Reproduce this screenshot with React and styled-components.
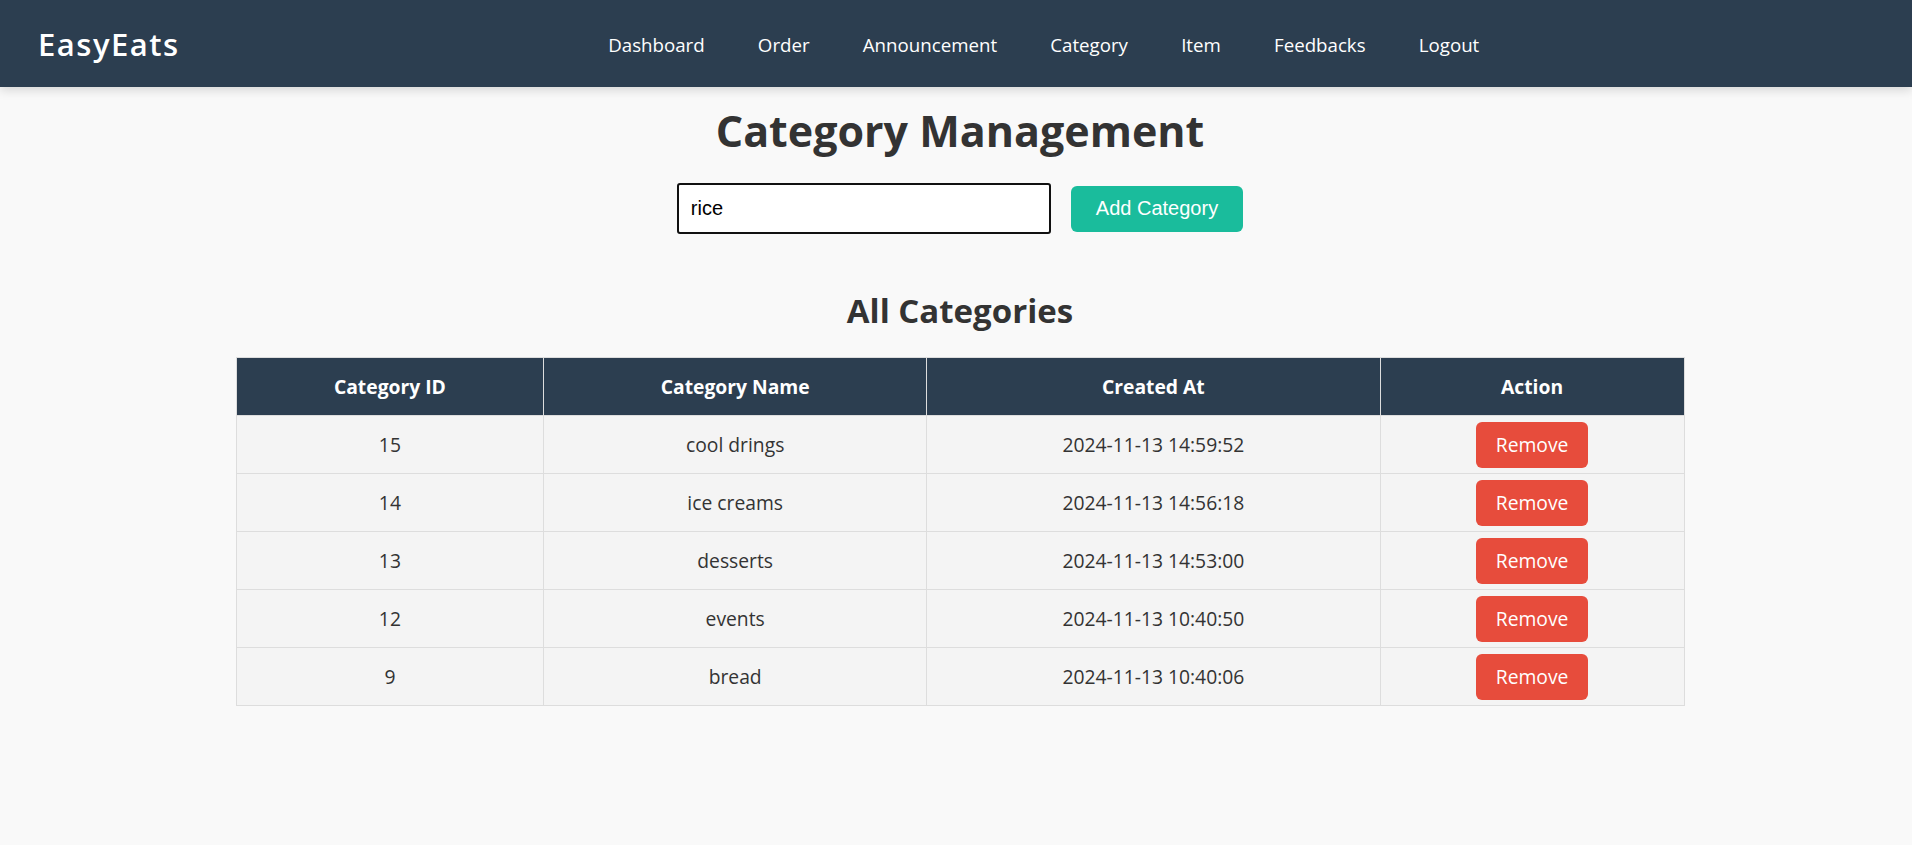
import React, { useState } from "react";
import styled, { createGlobalStyle } from "styled-components";

const GlobalStyle = createGlobalStyle`
  * {
    box-sizing: border-box;
  }
  body {
    margin: 0;
    background-color: #f9f9f9;
    font-family: "Open Sans", "Noto Sans", sans-serif;
    color: #333;
  }
`;

const StyledHeader = styled.header`
  height: 87px;
  background-color: #2c3e50;
  box-shadow: 0 3px 10px rgba(0, 0, 0, 0.15);
  display: flex;
  align-items: center;
  padding: 0 38px;
  position: relative;
  z-index: 2;
`;

const Logo = styled.div`
  color: #fff;
  font-size: 31px;
  font-weight: 600;
  letter-spacing: 1.5px;
`;

const NavList = styled.ul`
  display: flex;
  list-style: none;
  margin: 2px 0 0 402px;
  padding: 0;
  li a {
    display: block;
    padding: 0 26.6px;
    color: #fff;
    font-size: 18.7px;
    text-decoration: none;
  }
`;

const Main = styled.main`
  display: flex;
  flex-direction: column;
  align-items: center;
  padding: 0 0 60px 8px;
`;

const Title = styled.h1`
  margin: 20px 0 28px;
  font-size: 43px;
  line-height: 48px;
  font-weight: 700;
  color: #333;
`;

const AddRow = styled.form`
  display: flex;
  align-items: center;
  gap: 20px;
`;

const TextInput = styled.input`
  width: 374px;
  height: 51px;
  border: 2px solid #111;
  border-radius: 3px;
  padding: 0 12px;
  font-family: "Liberation Sans", Arial, sans-serif;
  font-size: 20px;
  color: #000;
  background: #fff;
  outline: none;
`;

const AddButton = styled.button`
  height: 46px;
  padding: 0 25px;
  border: none;
  border-radius: 6px;
  background-color: #1abc9c;
  color: #fff;
  font-family: "Liberation Sans", Arial, sans-serif;
  font-size: 20px;
  cursor: pointer;
`;

const SubTitle = styled.h2`
  margin: 59px 0 28px;
  font-size: 33px;
  line-height: 36px;
  font-weight: 700;
  color: #333;
`;

const Table = styled.table`
  width: 1449px;
  border-collapse: collapse;
  font-size: 19.3px;
  th,
  td {
    border: 1px solid #ddd;
    text-align: center;
    height: 58px;
    padding: 0 12px;
  }
  th {
    background-color: #2c3e50;
    color: #fff;
    font-weight: 700;
  }
  td {
    background-color: #f4f4f4;
    color: #333;
  }
`;

const RemoveButton = styled.button`
  height: 46px;
  padding: 0 20px;
  border: none;
  border-radius: 6px;
  background-color: #e74c3c;
  color: #fff;
  font-family: "Open Sans", "Noto Sans", sans-serif;
  font-size: 19.3px;
  cursor: pointer;
  vertical-align: middle;
`;

const navItems = [
  "Dashboard",
  "Order",
  "Announcement",
  "Category",
  "Item",
  "Feedbacks",
  "Logout",
];

const columns = [
  { label: "Category ID", width: 308 },
  { label: "Category Name", width: 383 },
  { label: "Created At", width: 454 },
  { label: "Action", width: 304 },
];

const initialCategories = [
  { id: 15, name: "cool drings", created: "2024-11-13 14:59:52" },
  { id: 14, name: "ice creams", created: "2024-11-13 14:56:18" },
  { id: 13, name: "desserts", created: "2024-11-13 14:53:00" },
  { id: 12, name: "events", created: "2024-11-13 10:40:50" },
  { id: 9, name: "bread", created: "2024-11-13 10:40:06" },
];

const App = () => {
  const [name, setName] = useState("rice");
  const [categories, setCategories] = useState(initialCategories);

  return (
    <>
      <GlobalStyle />
      <StyledHeader>
        <Logo>EasyEats</Logo>
        <nav>
          <NavList>
            {navItems.map((item) => (
              <li key={item}>
                <a href="#">{item}</a>
              </li>
            ))}
          </NavList>
        </nav>
      </StyledHeader>
      <Main>
        <Title>Category Management</Title>
        <AddRow onSubmit={(e) => e.preventDefault()}>
          <TextInput value={name} onChange={(e) => setName(e.target.value)} />
          <AddButton type="submit">Add Category</AddButton>
        </AddRow>
        <SubTitle>All Categories</SubTitle>
        <Table>
          <colgroup>
            {columns.map((col) => (
              <col key={col.label} style={{ width: col.width }} />
            ))}
          </colgroup>
          <thead>
            <tr>
              {columns.map((col) => (
                <th key={col.label}>{col.label}</th>
              ))}
            </tr>
          </thead>
          <tbody>
            {categories.map((cat) => (
              <tr key={cat.id}>
                <td>{cat.id}</td>
                <td>{cat.name}</td>
                <td>{cat.created}</td>
                <td>
                  <RemoveButton
                    onClick={() =>
                      setCategories(categories.filter((c) => c.id !== cat.id))
                    }
                  >
                    Remove
                  </RemoveButton>
                </td>
              </tr>
            ))}
          </tbody>
        </Table>
      </Main>
    </>
  );
};

export default App;
